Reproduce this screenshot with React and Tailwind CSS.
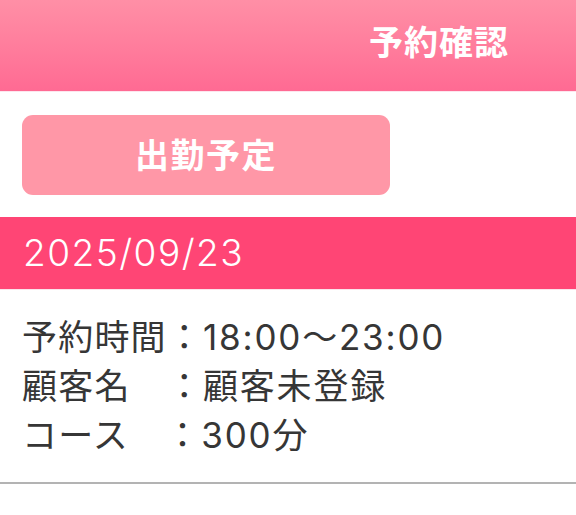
import React from 'react';

const rows = [
  { label: '予約時間', value: '18:00～23:00' },
  { label: '顧客名　', value: '顧客未登録' },
  { label: 'コース　', value: '300分' },
];

export default function App() {
  return (
    <div
      className="w-[576px] h-[515px] bg-white overflow-hidden"
      style={{ fontFamily: '"Inter", "Noto Sans CJK JP", sans-serif' }}
    >
      {/* Header */}
      <header className="h-[92px] flex items-center justify-end pr-[67px] pb-[6px] bg-gradient-to-b from-[#ff8fa6] to-[#ff6a93] border-b border-[#fde6ee]">
        <h1 className="text-[34px] font-bold text-white tracking-[1px]">予約確認</h1>
      </header>

      {/* Status button */}
      <div className="px-[22px] pt-[23px] pb-[22px]">
        <button className="w-[368px] h-[80px] rounded-[11px] bg-[#ff97a7] text-white text-[34px] font-bold tracking-[1.5px]">
          出勤予定
        </button>
      </div>

      {/* Date bar */}
      <div className="h-[73px] flex items-center px-[23px] bg-[#ff4575] border-b border-[#fbe3ea]">
        <span className="text-[37px] font-light text-white tracking-[1.5px]">2025/09/23</span>
      </div>

      {/* Details */}
      <div className="px-[22px] pt-[23px] pb-[22px] border-b-2 border-[#b3b3b3] text-[#363636] text-[35px] leading-[49px] tracking-[1.2px]">
        {rows.map((r) => (
          <div key={r.label}>
            {r.label}：<span className="tracking-[1.8px]">{r.value}</span>
          </div>
        ))}
      </div>
    </div>
  );
}
